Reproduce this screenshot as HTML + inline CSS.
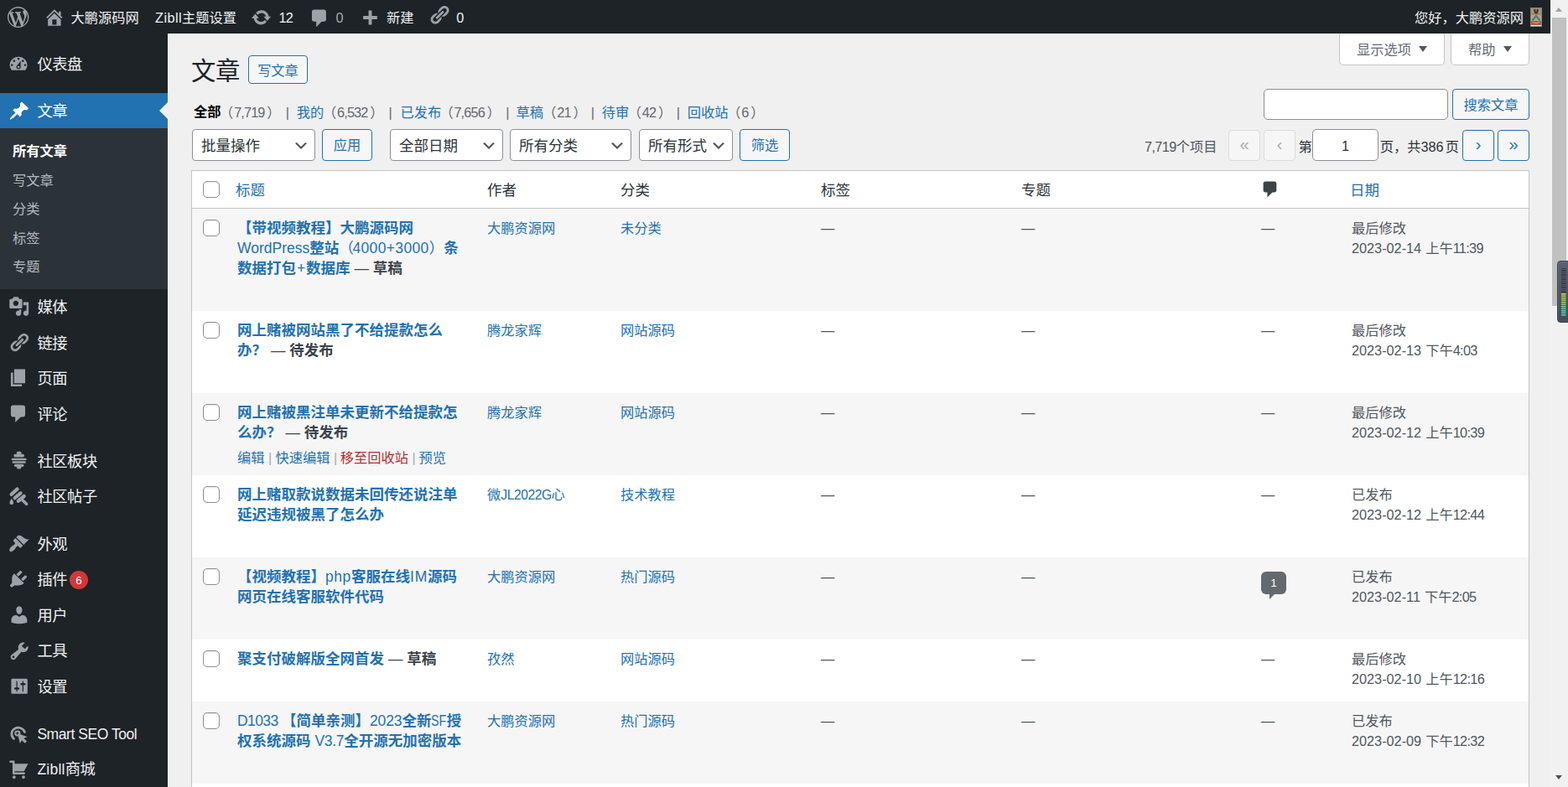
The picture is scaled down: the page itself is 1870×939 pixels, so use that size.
<!DOCTYPE html>
<html lang="zh-CN">
<head>
<meta charset="utf-8">
<title>文章 ‹ 大鹏源码网 — WordPress</title>
<style>
*{box-sizing:border-box}
html,body{margin:0;padding:0}
body{width:1870px;height:939px;overflow:hidden;position:relative;background:#f0f0f1;
 font-family:"Liberation Sans","Noto Sans CJK SC",sans-serif;font-size:16.25px;color:#3c434a;line-height:1.4}
a{text-decoration:none;color:#2271b1}
.ic{position:absolute;display:block;overflow:visible}
.abs{position:absolute;white-space:nowrap}
#bar{position:absolute;left:0;top:0;width:1849px;height:40px;background:#1d2327;color:#f0f0f1}
#bar .t{position:absolute;top:0;height:40px;line-height:40px;white-space:nowrap;font-size:16.25px;padding-top:1px}
#menu{position:absolute;left:0;top:40px;width:200px;height:899px;background:#1d2327}
#menu .m{position:absolute;left:0;width:200px;height:42.5px;color:#f0f0f1;font-size:18.3px;letter-spacing:-.45px}
#menu .lat2{font-size:17.5px;letter-spacing:.25px}
#menu .lat{font-size:17.5px;letter-spacing:-.45px}
#menu .m span.l{position:absolute;left:44.4px;top:0;line-height:42.5px;white-space:nowrap;padding-top:1px}
#menu .cur{background:#2271b1;color:#fff;height:42px!important}
#menu .sub{position:absolute;left:0;top:113px;width:200px;height:192px;background:#2c3338}
#menu .s{position:absolute;left:15px;height:34.5px;line-height:34.5px;font-size:16.25px;color:rgba(240,246,252,.7);white-space:nowrap}
#menu .s.on{color:#fff;font-weight:700}
.btn{position:absolute;border:1px solid #2271b1;border-radius:4px;background:#f6f6f6;color:#2271b1;font-size:16.25px;text-align:center;white-space:nowrap}
.sel{position:absolute;border:1px solid #8c8f94;border-radius:4px;background:#fff;color:#2c3338;font-size:17.5px;white-space:nowrap;height:38px;line-height:38px;padding-left:10px}
.sel svg{position:absolute;right:6px;top:9px;width:20px;height:20px}
.inp{position:absolute;border:1px solid #8c8f94;border-radius:5px;background:#fff}
.tab{position:absolute;top:40px;height:38px;border:1px solid #c3c4c7;border-top:none;border-radius:0 0 5px 5px;background:#fff;color:#646970;font-size:16.25px;line-height:39px;white-space:nowrap;padding-left:20px}
.tab i{position:absolute;top:14.5px;width:0;height:0;border-left:5.500px solid transparent;border-right:5.500px solid transparent;border-top:7.500px solid #50575e}
#tbl{position:absolute;left:228px;top:203px;width:1596px;height:760px;border:1px solid #c4c4c4;background:#fff;box-shadow:0 1px 1px rgba(0,0,0,.04)}
#tbl .hd{position:absolute;left:0;top:0;width:1594px;height:45px;border-bottom:1px solid #c4c4c4;background:#fff}
#tbl .r{position:absolute;left:0;width:1594px}
#tbl .odd{background:#f6f6f6}
.cb{position:absolute;left:13px;width:20px;height:20px;border:1px solid #8c8f94;border-radius:5px;background:#fff;box-shadow:inset 0 1px 2px rgba(0,0,0,.1)}
.h{position:absolute;top:0;height:44px;line-height:44px;font-size:17.5px;white-space:nowrap;color:#2c3338;padding-top:1px}
.c{position:absolute;top:11px;line-height:24px;font-size:16.25px;white-space:nowrap;color:#50575e}
.ti{position:absolute;left:54px;top:11px;font-size:17.5px;line-height:24px;font-weight:700;color:#2271b1;white-space:nowrap}
.ti b{color:#3c434a;font-weight:700}
.ti b i{font-style:normal;font-weight:400}
.ti .n{font-weight:400}
.dash{color:#50575e}
.ra{margin-left:-1.2px}
#subsub{position:absolute;left:0;top:122px;font-size:16.25px;line-height:24px;color:#646970}
#subsub .abs{top:0}
#subsub .d{margin-left:.8px;letter-spacing:-.85px}
#subsub .p2{margin-left:2.8px}
#subsub .sp{color:#646970}
</style>
</head>
<body>
<div id="bar">
<svg class="ic" preserveAspectRatio="none" style="left:8.55px;top:7.95px;width:25.40px;height:25.00px" viewBox="0 0 20 20"><path fill="#9ca2a7" d="M20 10c0-5.51-4.49-10-10-10C4.48 0 0 4.49 0 10c0 5.52 4.48 10 10 10 5.51 0 10-4.48 10-10zM7.78 15.37L4.37 6.22c.55-.02 1.17-.08 1.17-.08.5-.06.44-1.13-.06-1.11 0 0-1.45.11-2.37.11-.18 0-.37 0-.58-.01C4.120 2.690 6.870 1.110 10 1.110c2.330 0 4.450.87 6.050 2.340-.68-.11-1.650.39-1.650 1.580 0 .74.450 1.360.900 2.100.35.610.55 1.360.55 2.460 0 1.490-1.400 5-1.400 5l-3.030-8.370c.54-.02.82-.17.82-.17.5-.05.44-1.250-.06-1.220 0 0-1.440.12-2.380.12-.87 0-2.330-.12-2.330-.12-.5-.03-.56 1.200-.06 1.220l.92.080 1.260 3.410zM17.410 10c.24-.64.740-1.870.430-4.250.7 1.290 1.050 2.710 1.050 4.250 0 3.290-1.730 6.240-4.400 7.780.97-2.590 1.940-5.200 2.920-7.780zM6.100 18.090C3.120 16.650 1.110 13.530 1.110 10c0-1.300.23-2.480.72-3.590C3.250 10.300 4.670 14.200 6.100 18.090zm4.030-6.630l2.580 6.980c-.86.290-1.760.45-2.710.45-.79 0-1.570-.11-2.290-.33.810-2.380 1.620-4.740 2.420-7.100z"/></svg>
<svg class="ic" preserveAspectRatio="none" style="left:52.03px;top:7.99px;width:25.73px;height:25.29px" viewBox="0 0 20 20"><path fill="#9ca2a7" d="M16 8.500l1.530 1.530-1.060 1.060L10 4.620l-6.470 6.470-1.060-1.060L10 2.500l4 4v-2h2v4zm-6-2.460l6 5.990V18H4v-5.970zM12 17v-5H8v5h4z"/></svg>
<div class="t" style="left:84.5px">大鹏源码网</div>
<div class="t" style="left:185px"><span style="letter-spacing:.45px">Zibll</span>主题设置</div>
<svg class="ic" preserveAspectRatio="none" style="left:299.28px;top:7.79px;width:25.25px;height:25.58px" viewBox="0 0 20 20"><path fill="#9ca2a7" d="M10.200 3.280c3.530 0 6.430 2.610 6.920 6h2.080l-3.500 4-3.500-4h2.320c-.45-1.970-2.210-3.450-4.320-3.450-1.450 0-2.730.71-3.540 1.780L4.950 5.660C6.230 4.200 8.110 3.280 10.200 3.280zm-.4 13.440c-3.520 0-6.430-2.610-6.920-6H.800l3.500-4c1.170 1.330 2.330 2.670 3.500 4H5.480c.45 1.970 2.210 3.450 4.320 3.450 1.450 0 2.730-.71 3.540-1.780l1.710 1.950c-1.280 1.460-3.150 2.380-5.250 2.380z"/></svg>
<div class="t" style="left:332.4px;letter-spacing:-.6px">12</div>
<svg class="ic" preserveAspectRatio="none" style="left:367.83px;top:8.57px;width:26.15px;height:25.75px" viewBox="0 0 20 20"><path fill="#9ca2a7" d="M5 2h9c1.100 0 2 .900 2 2v7c0 1.100-.900 2-2 2h-2l-5 5v-5H5c-1.100 0-2-.900-2-2V4c0-1.100.900-2 2-2z"/></svg>
<div class="t" style="left:400.6px;color:#a7aaad">0</div>
<svg class="ic" preserveAspectRatio="none" style="left:427.91px;top:9.65px;width:25.69px;height:26.00px" viewBox="0 0 20 20"><path fill="#9ca2a7" d="M17 7v3h-5v5H9v-5H4V7h5V2h3v5h5z"/></svg>
<div class="t" style="left:461px">新建</div>
<svg class="ic" preserveAspectRatio="none" style="left:511.46px;top:5.04px;width:25.88px;height:25.53px" viewBox="0 0 20 20"><path fill="#9ca2a7" d="M17.740 2.760c1.680 1.690 1.680 4.410 0 6.100l-1.530 1.520c-1.120 1.120-2.700 1.470-4.140 1.090l2.620-2.610.760-.770.760-.760c.840-.840.840-2.200 0-3.040-.840-.850-2.200-.850-3.040 0l-.770.760-3.380 3.380c-.370-1.440-.020-3.020 1.100-4.140l1.520-1.530c1.690-1.680 4.420-1.680 6.100 0zM8.590 13.430l5.340-5.340c.420-.420.420-1.100 0-1.520-.440-.430-1.130-.390-1.530 0l-5.330 5.340c-.420.420-.420 1.100 0 1.520.440.430 1.130.390 1.520 0zm-.760 2.290l4.140-4.150c.380 1.440.030 3.020-1.090 4.140l-1.520 1.530c-1.690 1.680-4.410 1.680-6.100 0-1.680-1.680-1.680-4.420 0-6.100l1.530-1.520c1.120-1.120 2.700-1.470 4.140-1.100l-4.140 4.150c-.850.840-.850 2.200 0 3.050.840.840 2.200.840 3.040 0z"/></svg>
<div class="t" style="left:544.2px">0</div>
<div class="t" style="right:32px">您好，大鹏资源网</div>
<svg class="ic" id="avatar" style="left:1825px;top:9px;width:14px;height:23px" viewBox="0 0 14 23"><rect width="14" height="23" fill="#85888c"/><rect x="1" y="1" width="12" height="21" fill="#b59a7c"/><rect x="1" y="1" width="12" height="8" fill="#a38a6c"/><ellipse cx="7" cy="4.500" rx="3.200" ry="3" fill="#4b3a2a"/><path d="M2 4l3 2M12 4l-3 2M7 1v3" stroke="#d9c9ae" stroke-width=".8" fill="none"/><rect x="1" y="9" width="12" height="7" fill="#bfa283"/><path d="M2.500 15.500L7 10l4.500 5.500" stroke="#3f8577" stroke-width="2.200" fill="none"/><rect x="1" y="16" width="12" height="5" fill="#a9603c"/><path d="M3 17l4 2 4-2" stroke="#d9a070" stroke-width="1" fill="none"/><rect x="1" y="21" width="12" height="1" fill="#f2eee8"/></svg>
</div>
<div id="menu">
<div class="m" style="top:15px"><span class="l">仪表盘</span></div>
<div class="m cur" style="top:71px"><span class="l">文章</span><i style="position:absolute;right:0;top:11px;width:0;height:0;border:10px solid transparent;border-right-color:#f0f0f1"></i></div>
<div class="sub">
<div class="s on" style="top:10.0px">所有文章</div>
<div class="s" style="top:44.6px">写文章</div>
<div class="s" style="top:79.2px">分类</div>
<div class="s" style="top:113.80000000000001px">标签</div>
<div class="s" style="top:148.4px">专题</div>
</div>
<div class="m" style="top:305px"><span class="l">媒体</span></div>
<div class="m" style="top:347.5px"><span class="l">链接</span></div>
<div class="m" style="top:390px"><span class="l">页面</span></div>
<div class="m" style="top:432.5px"><span class="l">评论</span></div>
<div class="m" style="top:488.75px"><span class="l">社区板块</span></div>
<div class="m" style="top:531.25px"><span class="l">社区帖子</span></div>
<div class="m" style="top:587.5px"><span class="l">外观</span></div>
<div class="m" style="top:630px"><span class="l">插件</span><span style="position:absolute;left:83px;top:11px;width:22px;height:22px;border-radius:11px;background:#d63638;color:#fff;font-size:13.5px;line-height:24px;text-align:center;letter-spacing:0">6</span></div>
<div class="m" style="top:672.5px"><span class="l">用户</span></div>
<div class="m" style="top:715px"><span class="l">工具</span></div>
<div class="m" style="top:757.5px"><span class="l">设置</span></div>
<div class="m" style="top:813.75px"><span class="l"><span class="lat">Smart SEO Tool</span></span></div>
<div class="m" style="top:856.25px"><span class="l"><span class="lat2">Zibll</span>商城</span></div>
<svg class="ic" preserveAspectRatio="none" style="left:9.34px;top:24.13px;width:26.13px;height:24.77px" viewBox="0 0 20 20"><path fill="#9ca2a7" d="M3.760 16h12.480c1.100-1.370 1.760-3.110 1.760-5 0-4.420-3.580-8-8-8s-8 3.580-8 8c0 1.890.66 3.630 1.760 5zM10 4c.55 0 1 .45 1 1s-.45 1-1 1-1-.45-1-1 .45-1 1-1zM6 6c.55 0 1 .45 1 1s-.45 1-1 1-1-.45-1-1 .45-1 1-1zm8 0c.55 0 1 .45 1 1s-.45 1-1 1-1-.45-1-1 .45-1 1-1zm-5.370 5.550L12 7v6c0 1.100-.9 2-2 2s-2-.9-2-2c0-.57.240-1.080.630-1.450zM4 10c.55 0 1 .45 1 1s-.45 1-1 1-1-.45-1-1 .45-1 1-1zm12 0c.55 0 1 .45 1 1s-.45 1-1 1-1-.45-1-1 .45-1 1-1zm-5 3c0-.55-.45-1-1-1s-1 .45-1 1 .45 1 1 1 1-.45 1-1z"/></svg>
<svg class="ic" preserveAspectRatio="none" style="left:9.53px;top:80.18px;width:26.05px;height:24.58px" viewBox="0 0 20 20"><path fill="#fff" d="M10.440 3.020l1.820-1.820 6.360 6.350-1.830 1.820c-1.050-.68-2.480-.57-3.410.36l-.75.75c-.92.93-1.040 2.350-.35 3.410l-1.830 1.820-2.410-2.410-2.800 2.790c-.42.42-3.380 2.710-3.800 2.290s1.860-3.390 2.280-3.810l2.790-2.790L4.100 9.360l1.830-1.820c1.050.69 2.480.57 3.400-.36l.75-.75c.93-.92 1.050-2.350.36-3.410z"/></svg>
<svg class="ic" preserveAspectRatio="none" style="left:9.78px;top:313.09px;width:25.44px;height:25.11px" viewBox="0 0 20 20"><path fill="#9ca2a7" d="M13 11V4c0-.55-.45-1-1-1h-1.670L9 1H5L3.670 3H2c-.55 0-1 .45-1 1v7c0 .55.45 1 1 1h10c.55 0 1-.45 1-1zM7 4.500c1.380 0 2.500 1.120 2.500 2.500S8.380 9.500 7 9.500 4.500 8.380 4.500 7 5.620 4.500 7 4.500zM14 6h5v10.500c0 1.380-1.120 2.500-2.500 2.500S14 17.880 14 16.500s1.120-2.500 2.500-2.500c.17 0 .34.020.5.050V9h-3V6zm-4 8.050V13h2v3.500c0 1.380-1.120 2.500-2.500 2.500S7 17.880 7 16.500 8.120 14 9.500 14c.17 0 .34.020.5.050z"/></svg>
<svg class="ic" preserveAspectRatio="none" style="left:9.81px;top:355.97px;width:25.41px;height:25.06px" viewBox="0 0 20 20"><path fill="#9ca2a7" d="M17.740 2.760c1.680 1.690 1.680 4.410 0 6.100l-1.530 1.520c-1.120 1.120-2.700 1.470-4.140 1.090l2.620-2.610.760-.770.760-.760c.840-.840.840-2.200 0-3.040-.840-.850-2.200-.850-3.040 0l-.770.760-3.380 3.380c-.370-1.440-.020-3.020 1.100-4.140l1.520-1.530c1.690-1.680 4.420-1.680 6.100 0zM8.590 13.430l5.340-5.340c.420-.420.420-1.100 0-1.520-.440-.430-1.130-.390-1.530 0l-5.330 5.340c-.420.420-.420 1.100 0 1.520.440.430 1.130.390 1.520 0zm-.760 2.290l4.140-4.150c.380 1.440.030 3.020-1.090 4.140l-1.520 1.530c-1.690 1.680-4.410 1.680-6.100 0-1.680-1.680-1.680-4.420 0-6.100l1.530-1.520c1.120-1.120 2.700-1.470 4.140-1.100l-4.140 4.150c-.850.840-.850 2.200 0 3.050.840.840 2.200.840 3.040 0z"/></svg>
<svg class="ic" preserveAspectRatio="none" style="left:9.40px;top:397.69px;width:26.31px;height:25.62px" viewBox="0 0 20 20"><path fill="#9ca2a7" d="M6 15V2h10v13H6zm-1 1h8v2H3V5h2v11z"/></svg>
<svg class="ic" preserveAspectRatio="none" style="left:9.40px;top:440.60px;width:26.31px;height:25.50px" viewBox="0 0 20 20"><path fill="#9ca2a7" d="M5 2h9c1.100 0 2 .900 2 2v7c0 1.100-.900 2-2 2h-2l-5 5v-5H5c-1.100 0-2-.900-2-2V4c0-1.100.900-2 2-2z"/></svg>
<svg class="ic" preserveAspectRatio="none" style="left:9.67px;top:497.30px;width:25.35px;height:25.44px" viewBox="0 0 20 20"><g fill="none" stroke="#9ca2a7" stroke-linecap="round"><path stroke-width="2.6" d="M9 2.6h2"/><path stroke-width="2.9" d="M6.500 5.2h7"/><path stroke-width="2" d="M3.900 8.650h12.200"/><path stroke-width="2" d="M4.600 11.350h10.800"/><path stroke-width="2.5" d="M6.700 14.400h6.600"/><path stroke-width="2.300" d="M9 16.500h2"/></g></svg>
<svg class="ic" preserveAspectRatio="none" style="left:9.48px;top:539.68px;width:25.96px;height:26.71px" viewBox="0 0 20 20"><g fill="none" stroke="#9ca2a7" stroke-linecap="round"><path stroke-width="3.2" d="M3.500 7.400L8.900 2.700"/><path stroke-width="3.2" d="M6.700 10.600L12 6.300"/><path stroke-width="3.2" d="M9.800 13.300L15.200 9"/><path stroke-width="2.700" d="M13.400 12.300L17.500 16"/></g><path fill="#9ca2a7" d="M3.700 11c1 1.500 1.800 2.700 1.800 3.700 0 1-.8 1.800-1.800 1.800s-1.800-.8-1.800-1.800c0-1 .8-2.200 1.800-3.700z"/></svg>
<svg class="ic" preserveAspectRatio="none" style="left:9.79px;top:595.62px;width:25.17px;height:25.41px" viewBox="0 0 20 20"><path fill="#9ca2a7" d="M14.480 11.060L7.410 3.990l1.500-1.500c.5-.56 2.300-.47 3.510.32 1.210.8 1.430 1.280 2.910 2.100 1.180.64 2.450 1.260 4.450.85zm-.71.71L6.700 4.700 4.930 6.470c-.39.39-.39 1.020 0 1.410l1.060 1.060c.39.39.39 1.030 0 1.420-.6.600-1.430 1.110-2.210 1.690-.35.260-.7.530-1.010.84C1.430 14.230.4 16.080 1.400 17.070c.99 1 2.840-.03 4.180-1.360.31-.31.58-.66.85-1.020.57-.78 1.080-1.610 1.690-2.210.39-.39 1.020-.39 1.410 0l1.060 1.060c.39.39 1.020.39 1.410 0z"/></svg>
<svg class="ic" preserveAspectRatio="none" style="left:9.48px;top:638.02px;width:26.14px;height:25.45px" viewBox="0 0 20 20"><path fill="#9ca2a7" d="M13.110 4.360L9.870 7.600 8 5.730l3.240-3.240c.35-.34 1.050-.2 1.560.32.52.51.66 1.210.31 1.550zm-8 1.770l.91-1.120 9.010 9.010-1.190.84c-.71.71-2.630 1.160-3.820 1.160H6.140L4.900 17.260c-.59.590-1.540.59-2.120 0-.59-.58-.59-1.530 0-2.120L4.020 13.900v-3.880c0-1.190.38-3.180 1.090-3.890zm7.260 3.970l3.240-3.240c.34-.35 1.040-.21 1.550.31.52.51.66 1.210.31 1.550l-3.240 3.250z"/></svg>
<svg class="ic" preserveAspectRatio="none" style="left:9.58px;top:680.60px;width:25.93px;height:25.51px" viewBox="0 0 20 20"><path fill="#9ca2a7" d="M10 9.250c-2.270 0-2.730-3.440-2.730-3.440C7 4.020 7.820 2 9.970 2c2.160 0 2.980 2.020 2.710 3.810 0 0-.41 3.440-2.680 3.440zm0 2.570L12.720 10c2.390 0 4.520 2.330 4.520 4.530v2.490s-3.650 1.130-7.240 1.130c-3.650 0-7.240-1.130-7.240-1.130v-2.490c0-2.250 1.940-4.480 4.470-4.480z"/></svg>
<svg class="ic" preserveAspectRatio="none" style="left:9.53px;top:723.62px;width:26.25px;height:25.71px" viewBox="0 0 20 20"><path fill="#9ca2a7" d="M16.680 9.770c-1.340 1.340-3.300 1.670-4.950.99l-5.410 6.520c-.99.990-2.590.990-3.580 0s-.99-2.590 0-3.570l6.520-5.420c-.68-1.650-.35-3.610.99-4.950 1.280-1.280 3.120-1.620 4.720-1.060l-2.890 2.890 2.820 2.820 2.860-2.870c.53 1.580.18 3.390-1.080 4.650zM3.810 16.210c.4.390 1.040.39 1.430 0 .4-.4.400-1.040 0-1.430-.39-.4-1.030-.4-1.430 0-.39.390-.39 1.030 0 1.430z"/></svg>
<svg class="ic" preserveAspectRatio="none" style="left:10.82px;top:765.59px;width:24.25px;height:25.71px" viewBox="0 0 20 20"><path fill="#9ca2a7" d="M18 16V4c0-.55-.45-1-1-1H3c-.55 0-1 .45-1 1v12c0 .55.45 1 1 1h14c.55 0 1-.45 1-1zM8 11h1c.55 0 1 .45 1 1s-.45 1-1 1H8v1.500c0 .28-.22.5-.5.5s-.5-.22-.5-.5V13H6c-.55 0-1-.45-1-1s.45-1 1-1h1V5.500c0-.28.22-.5.5-.5s.5.22.5.5V11zm5-2h-1c-.55 0-1-.45-1-1s.45-1 1-1h1V5.500c0-.28.22-.5.5-.5s.5.22.5.5V7h1c.55 0 1 .45 1 1s-.45 1-1 1h-1v5.500c0 .28-.22.5-.5.5s-.5-.22-.5-.5V9z"/></svg>
<svg class="ic" preserveAspectRatio="none" style="left:9.91px;top:824.31px;width:25.00px;height:23.70px" viewBox="0 0 20 20"><path fill="none" stroke="#9ca2a7" stroke-width="2.3" stroke-linecap="round" d="M5.2 14.700A6.400 6.400 0 1 1 15.600 8"/><circle cx="8.700" cy="9.300" r="2.100" fill="none" stroke="#9ca2a7" stroke-width="1.6"/><path fill="#9ca2a7" d="M8.600 9.200l9.400 3.400-3.300 1.700 3 3-1.900 1.900-3-3-1.700 3.300z"/></svg>
<svg class="ic" preserveAspectRatio="none" style="left:10.11px;top:864.61px;width:24.89px;height:25.41px" viewBox="0 0 20 20"><path fill="#9ca2a7" d="M6 13h9c.55 0 1 .45 1 1s-.45 1-1 1H5c-.55 0-1-.45-1-1V4H2c-.55 0-1-.45-1-1s.45-1 1-1h3c.55 0 1 .45 1 1v2h13l-4 7H6v1zm-.5 3c.83 0 1.500.67 1.500 1.500S6.330 19 5.500 19 4 18.330 4 17.500 4.670 16 5.500 16zm9 0c.83 0 1.500.67 1.500 1.500s-.67 1.500-1.500 1.500-1.500-.67-1.500-1.500.67-1.500 1.500-1.500z"/></svg>
</div>
<div class="tab" style="left:1597px;width:126px">显示选项<i style="left:94px"></i></div>
<div class="tab" style="left:1730px;width:94px">帮助<i style="left:62px"></i></div>
<h1 class="abs" style="left:228px;top:63.5px;margin:0;font-size:29.4px;letter-spacing:-.5px;font-weight:400;line-height:42px;color:#1d2327">文章</h1>
<a class="btn" style="left:296px;top:66px;width:71px;height:34px;line-height:34px">写文章</a>
<div id="subsub">
<span class="abs" style="left:231.0px;top:-1px;color:#000;font-weight:700">全部</span>
<span class="abs cnt" style="left:262.1px">（<span class="d">7,719</span><span class="p2">）</span></span>
<span class="abs sp" style="left:340.7px">|</span>
<a class="abs" style="left:353.8px">我的</a>
<span class="abs cnt" style="left:385.0px">（<span class="d">6,532</span><span class="p2">）</span></span>
<span class="abs sp" style="left:463.6px">|</span>
<a class="abs" style="left:477.4px">已发布</a>
<span class="abs cnt" style="left:524.4px">（<span class="d">7,656</span><span class="p2">）</span></span>
<span class="abs sp" style="left:603.3px">|</span>
<a class="abs" style="left:615.6px">草稿</a>
<span class="abs cnt" style="left:647.2px">（<span class="d">21</span><span class="p2">）</span></span>
<span class="abs sp" style="left:704.8px">|</span>
<a class="abs" style="left:717.7px">待审</a>
<span class="abs cnt" style="left:748.8px">（<span class="d">42</span><span class="p2">）</span></span>
<span class="abs sp" style="left:806.8px">|</span>
<a class="abs" style="left:819.7px">回收站</a>
<span class="abs cnt" style="left:867.2px">（<span class="d">6</span><span class="p2">）</span></span>
</div>
<div class="inp" style="left:1507px;top:106px;width:220px;height:37px"></div>
<a class="btn" style="left:1732px;top:106px;width:92px;height:37px;line-height:37px">搜索文章</a>
<div class="sel" style="left:229px;top:154px;width:147px">批量操作<svg viewBox="0 0 20 20"><path d="M5 6l5 5 5-5 2 1-7 7-7-7z" fill="#50575e"/></svg></div>
<a class="btn" style="left:384px;top:154px;width:60px;height:38px;line-height:37px">应用</a>
<div class="sel" style="left:465px;top:154px;width:135px">全部日期<svg viewBox="0 0 20 20"><path d="M5 6l5 5 5-5 2 1-7 7-7-7z" fill="#50575e"/></svg></div>
<div class="sel" style="left:608px;top:154px;width:145px">所有分类<svg viewBox="0 0 20 20"><path d="M5 6l5 5 5-5 2 1-7 7-7-7z" fill="#50575e"/></svg></div>
<div class="sel" style="left:762px;top:154px;width:112px">所有形式<svg viewBox="0 0 20 20"><path d="M5 6l5 5 5-5 2 1-7 7-7-7z" fill="#50575e"/></svg></div>
<a class="btn" style="left:882px;top:154px;width:60px;height:38px;line-height:37px">筛选</a>
<div class="abs" style="left:1365px;top:163px;line-height:24px;font-size:16.25px;color:#50575e"><span style="letter-spacing:-.6px">7,719</span>个项目</div>
<span class="btn" style="left:1465px;top:155px;width:38px;height:37px;line-height:32px;font-size:20px;border-color:#dcdcde;color:#a7aaad;background:#f6f6f6">«</span>
<span class="btn" style="left:1507px;top:155px;width:38px;height:37px;line-height:32px;font-size:20px;border-color:#dcdcde;color:#a7aaad;background:#f6f6f6">‹</span>
<div class="abs" style="left:1548.500px;top:163px;line-height:24px;font-size:16.25px;color:#2c3338">第</div>
<div class="inp" style="left:1565px;top:154px;width:79px;height:38px;text-align:center;line-height:39px;font-size:16.25px;color:#2c3338">1</div>
<div class="abs" style="left:1645.800px;top:163px;line-height:24px;font-size:16.25px;color:#2c3338">页，共<span style="margin-right:2.200px">386</span>页</div>
<span class="btn" style="left:1744px;top:155px;width:38px;height:37px;line-height:32px;font-size:20px;">›</span>
<span class="btn" style="left:1786px;top:155px;width:38px;height:37px;line-height:32px;font-size:20px;">»</span>
<div id="tbl">
<div class="hd"><span class="cb" style="top:12px"></span>
<a class="h" style="left:52px;color:#2271b1">标题</a>
<span class="h" style="left:352px">作者</span>
<span class="h" style="left:511px">分类</span>
<span class="h" style="left:750px">标签</span>
<span class="h" style="left:989px">专题</span>
<svg class="ic" preserveAspectRatio="none" style="left:1273.63px;top:10.38px;width:24.15px;height:23.75px" viewBox="0 0 20 20"><path fill="#3c434a" d="M5 2h9c1.100 0 2 .900 2 2v7c0 1.100-.900 2-2 2h-2l-5 5v-5H5c-1.100 0-2-.900-2-2V4c0-1.100.900-2 2-2z"/></svg>
<a class="h" style="left:1381px;color:#2271b1">日期</a>
</div>
<div class="r odd" style="top:45px;height:122px">
<span class="cb" style="top:13px"></span>
<a class="ti">【带视频教程】大鹏源码网<br><span class="n">WordPress</span>整站<span class="n">（<span style="letter-spacing:.35px;margin-left:-1.300px">4000+3000</span>）</span>条<br>数据打包<span class="n" style="margin:0 .9px">+</span>数据库 <b><i>—</i> 草稿</b></a>
<a class="c" style="left:352px;color:#2271b1">大鹏资源网</a>
<a class="c" style="left:511px;color:#2271b1">未分类</a>
<span class="c dash" style="left:750px">—</span>
<span class="c dash" style="left:989px">—</span>
<span class="c dash" style="left:1275px">—</span>
<span class="c" style="left:1383px">最后修改<br>2023-02-14 <span style="margin-left:.5px">上午</span><span style="letter-spacing:-.65px">11:39</span></span>
</div>
<div class="r" style="top:167px;height:98px">
<span class="cb" style="top:13px"></span>
<a class="ti">网上赌被网站黑了不给提款怎么<br>办？ <b><i>—</i> 待发布</b></a>
<a class="c" style="left:352px;color:#2271b1">腾龙家辉</a>
<a class="c" style="left:511px;color:#2271b1">网站源码</a>
<span class="c dash" style="left:750px">—</span>
<span class="c dash" style="left:989px">—</span>
<span class="c dash" style="left:1275px">—</span>
<span class="c" style="left:1383px">最后修改<br>2023-02-13 <span style="margin-left:.5px">下午</span><span style="letter-spacing:-.65px">4:03</span></span>
</div>
<div class="r odd" style="top:265px;height:98px">
<span class="cb" style="top:13px"></span>
<a class="ti">网上赌被黑注单未更新不给提款怎<br>么办？ <b><i>—</i> 待发布</b></a>
<div class="abs" style="left:54px;top:65px;font-size:16.25px;line-height:24px;color:#a7aaad"><a>编辑</a> | <a style="margin-left:-.2px">快速编辑</a> | <a style="color:#b32d2e;margin-left:-1.200px">移至回收站</a> | <a style="margin-left:-.7px">预览</a></div>
<a class="c" style="left:352px;color:#2271b1">腾龙家辉</a>
<a class="c" style="left:511px;color:#2271b1">网站源码</a>
<span class="c dash" style="left:750px">—</span>
<span class="c dash" style="left:989px">—</span>
<span class="c dash" style="left:1275px">—</span>
<span class="c" style="left:1383px">最后修改<br>2023-02-12 <span style="margin-left:.5px">上午</span><span style="letter-spacing:-.65px">10:39</span></span>
</div>
<div class="r" style="top:363px;height:98px">
<span class="cb" style="top:13px"></span>
<a class="ti">网上赌取款说数据未回传还说注单<br>延迟违规被黑了怎么办</a>
<a class="c" style="left:352px;color:#2271b1">微<span style="font-size:15.600px;letter-spacing:-.4px;margin-right:-.3px">JL2022G</span>心</a>
<a class="c" style="left:511px;color:#2271b1">技术教程</a>
<span class="c dash" style="left:750px">—</span>
<span class="c dash" style="left:989px">—</span>
<span class="c dash" style="left:1275px">—</span>
<span class="c" style="left:1383px">已发布<br>2023-02-12 <span style="margin-left:.5px">上午</span><span style="letter-spacing:-.65px">12:44</span></span>
</div>
<div class="r odd" style="top:461px;height:98px">
<span class="cb" style="top:13px"></span>
<a class="ti">【视频教程】<span class="n" style="letter-spacing:.57px">php</span>客服在线<span class="n" style="letter-spacing:.85px">IM</span>源码<br>网页在线客服软件代码</a>
<a class="c" style="left:352px;color:#2271b1">大鹏资源网</a>
<a class="c" style="left:511px;color:#2271b1">热门源码</a>
<span class="c dash" style="left:750px">—</span>
<span class="c dash" style="left:989px">—</span>
<span class="abs" style="left:1275px;top:17px;width:30px;height:27px;border-radius:6px;background:#646970;color:#fff;font-size:13.5px;line-height:28px;text-align:center">1<i style="position:absolute;left:10px;top:26px;width:0;height:0;border-top:7px solid #646970;border-right:7px solid transparent"></i></span>
<span class="c" style="left:1383px">已发布<br>2023-02-11 <span style="margin-left:.5px">下午</span><span style="letter-spacing:-.65px">2:05</span></span>
</div>
<div class="r" style="top:559px;height:74px">
<span class="cb" style="top:13px"></span>
<a class="ti">聚支付破解版全网首发 <b><i>—</i> 草稿</b></a>
<a class="c" style="left:352px;color:#2271b1">孜然</a>
<a class="c" style="left:511px;color:#2271b1">网站源码</a>
<span class="c dash" style="left:750px">—</span>
<span class="c dash" style="left:989px">—</span>
<span class="c dash" style="left:1275px">—</span>
<span class="c" style="left:1383px">最后修改<br>2023-02-10 <span style="margin-left:.5px">上午</span><span style="letter-spacing:-.65px">12:16</span></span>
</div>
<div class="r odd" style="top:633px;height:98px">
<span class="cb" style="top:13px"></span>
<a class="ti"><span class="n" style="letter-spacing:-.58px">D1033 </span>【简单亲测】<span class="n" style="letter-spacing:-.1px">2023</span>全新<span class="n" style="display:inline-block;transform:scaleX(.82);transform-origin:0 50%;margin-right:-4px">SF</span>授<br>权系统源码 <span class="n" style="letter-spacing:-.3px">V3.7</span>全开源无加密版本</a>
<a class="c" style="left:352px;color:#2271b1">大鹏资源网</a>
<a class="c" style="left:511px;color:#2271b1">热门源码</a>
<span class="c dash" style="left:750px">—</span>
<span class="c dash" style="left:989px">—</span>
<span class="c dash" style="left:1275px">—</span>
<span class="c" style="left:1383px">已发布<br>2023-02-09 <span style="margin-left:.5px">下午</span><span style="letter-spacing:-.65px">12:32</span></span>
</div>
</div>
<div class="abs" style="left:1849px;top:0;width:21px;height:939px;background:#f1f1f1"></div>
<div class="abs" style="left:1851px;top:21px;width:17px;height:344px;background:#c1c1c1"></div>
<i class="abs" style="left:1855px;top:9px;width:0;height:0;border-left:4.500px solid transparent;border-right:4.500px solid transparent;border-bottom:5px solid #a3a3a3"></i>
<i class="abs" style="left:1855px;top:925px;width:0;height:0;border-left:4.500px solid transparent;border-right:4.500px solid transparent;border-top:5px solid #505050"></i>
<div class="abs" style="left:1857px;top:311px;width:16px;height:74px;background:linear-gradient(#5b6170,#474c5a);border-radius:4px 0 0 4px;border:1px solid #3e434f;box-shadow:inset 1px 1px 0 rgba(255,255,255,.08)"></div>
<div class="abs" style="left:1862px;top:320px;width:5.500px;height:29px;background:repeating-linear-gradient(#3a3f4b 0,#3a3f4b 1.500px,#535968 1.500px,#535968 2.500px)"></div>
<svg class="ic" style="left:1862px;top:350px;width:5.500px;height:27px" viewBox="0 0 5.500 27" preserveAspectRatio="none"><defs><linearGradient id="lg" gradientUnits="userSpaceOnUse" x1="0" y1="0" x2="0" y2="27"><stop offset="0" stop-color="#c9d44a"/><stop offset=".5" stop-color="#7fcf6f"/><stop offset="1" stop-color="#3fd0c0"/></linearGradient></defs><g fill="url(#lg)"><rect x="0" y="0.0" width="5.500" height="1.600"/><rect x="0" y="2.5" width="5.500" height="1.600"/><rect x="0" y="5.0" width="5.500" height="1.600"/><rect x="0" y="7.5" width="5.500" height="1.600"/><rect x="0" y="10.0" width="5.500" height="1.600"/><rect x="0" y="12.5" width="5.500" height="1.600"/><rect x="0" y="15.0" width="5.500" height="1.600"/><rect x="0" y="17.5" width="5.500" height="1.600"/><rect x="0" y="20.0" width="5.500" height="1.600"/><rect x="0" y="22.5" width="5.500" height="1.600"/><rect x="0" y="25.0" width="5.500" height="1.600"/></g></svg>
</body>
</html>
